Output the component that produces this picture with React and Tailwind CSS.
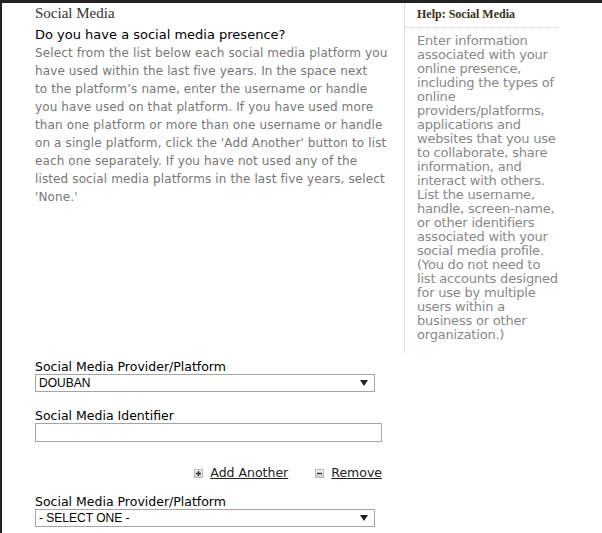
const descLines = [
  'Select from the list below each social media platform you',
  'have used within the last five years. In the space next',
  'to the platform’s name, enter the username or handle',
  'you have used on that platform. If you have used more',
  'than one platform or more than one username or handle',
  "on a single platform, click the 'Add Another' button to list",
  'each one separately. If you have not used any of the',
  'listed social media platforms in the last five years, select',
  "'None.'",
];

const helpLines = [
  'Enter information',
  'associated with your',
  'online presence,',
  'including the types of',
  'online',
  'providers/platforms,',
  'applications and',
  'websites that you use',
  'to collaborate, share',
  'information, and',
  'interact with others.',
  'List the username,',
  'handle, screen-name,',
  'or other identifiers',
  'associated with your',
  'social media profile.',
  '(You do not need to',
  'list accounts designed',
  'for use by multiple',
  'users within a',
  'business or other',
  'organization.)',
];

const PlusIcon = () => (
  <span className="inline-flex items-center justify-center w-[9px] h-[9px] bg-gradient-to-b from-[#f4f4f4] to-[#cfcfcf] border border-[#bbb] mr-[7px]">
    <svg width="7" height="7" viewBox="0 0 7 7">
      <path d="M3.5 1v5M1 3.5h5" stroke="#333" strokeWidth="1.4" />
    </svg>
  </span>
);

const MinusIcon = () => (
  <span className="inline-flex items-center justify-center w-[9px] h-[9px] bg-gradient-to-b from-[#f4f4f4] to-[#cfcfcf] border border-[#bbb] mr-[7px]">
    <svg width="7" height="7" viewBox="0 0 7 7">
      <path d="M1 3.5h5" stroke="#333" strokeWidth="1.4" />
    </svg>
  </span>
);

const SelectBox = ({ value }) => (
  <div className="w-[340px] h-[18px] border border-[#a5a5a5] bg-white flex items-center justify-between pl-[3px] pr-[6px] font-['Liberation_Sans',Arial,sans-serif] text-[12px] text-black">
    <span>{value}</span>
    <svg width="8" height="6" viewBox="0 0 8 6">
      <path d="M0 0h8L4 6z" fill="#222" />
    </svg>
  </div>
);

const Label = ({ children }) => (
  <div className="text-[12.5px] leading-[15px] text-black">{children}</div>
);

export default function App() {
  return (
    <div className="w-[602px] h-[533px] overflow-hidden bg-white border-t-[3px] border-l-[2px] border-[#222] font-['DejaVu_Sans',Verdana,sans-serif]">
      <div className="flex">
        <div className="w-[402px] pl-[33px] pr-[4px]">
          <div className="font-['Liberation_Serif',serif] text-[15px] text-[#333] pt-[1px] leading-[18px]">
            Social Media
          </div>
          <div className="text-[13px] leading-[18px] text-black mt-[4px]">
            Do you have a social media presence?
          </div>
          <div className="text-[12px] leading-[18px] text-[#777] tracking-[0.12px]">
            {descLines.map((l) => (
              <div key={l} className="whitespace-nowrap">{l}</div>
            ))}
          </div>
        </div>
        <div className="w-[160px] border-l border-[#ddd] h-[350px]">
          <div className="w-[153px] pl-[12px] pt-[3px] pb-[5px] border-b border-dotted border-[#ccc] font-['Liberation_Serif',serif] font-bold text-[12px] text-[#3a3020] leading-[16px]">
            Help: Social Media
          </div>
          <div className="pl-[12px] pt-[6px] text-[13px] leading-[14px] text-[#888] tracking-[-0.2px]">
            {helpLines.map((l, i) => (
              <div key={i} className="whitespace-nowrap">{l}</div>
            ))}
          </div>
        </div>
      </div>

      <div className="pl-[33px] pt-[6px]">
        <Label>Social Media Provider/Platform</Label>
        <SelectBox value="DOUBAN" />

        <div className="mt-[16px]">
          <Label>Social Media Identifier</Label>
          <div className="w-[347px] h-[19px] border border-[#a5a5a5] bg-white" />
        </div>

        <div className="w-[347px] flex justify-end items-center mt-[22px] text-[12.5px] text-[#222]">
          <span className="flex items-center">
            <PlusIcon />
            <a href="#" className="underline">Add Another</a>
          </span>
          <span className="flex items-center ml-[27px]">
            <MinusIcon />
            <a href="#" className="underline">Remove</a>
          </span>
        </div>

        <div className="mt-[11px]">
          <Label>Social Media Provider/Platform</Label>
          <SelectBox value="- SELECT ONE -" />
        </div>
      </div>
    </div>
  );
}
